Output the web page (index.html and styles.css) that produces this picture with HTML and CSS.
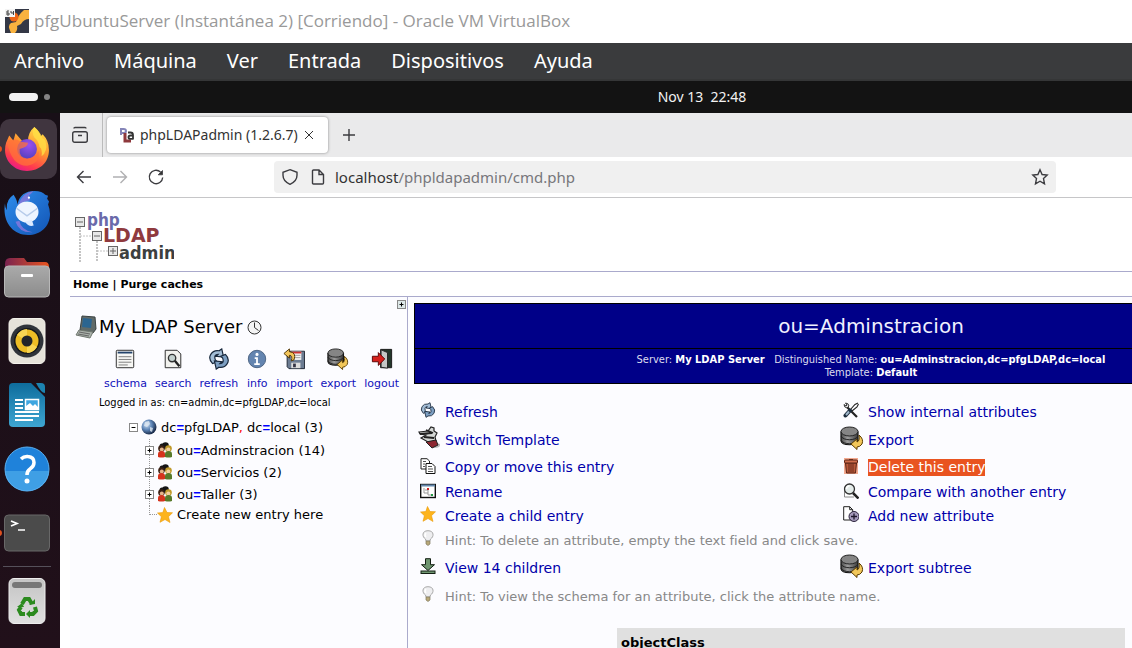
FILE: index.html
```
<!DOCTYPE html>
<html lang="es">
<head>
<meta charset="utf-8">
<title>pfgUbuntuServer - Oracle VM VirtualBox</title>
<link rel="stylesheet" href="styles.css">
</head>
<body>
<svg class="defs" aria-hidden="true">
  <defs>
    <linearGradient id="gFox" x1="0.8" y1="0" x2="0.3" y2="1"><stop offset="0" stop-color="#ffe34a"/><stop offset=".45" stop-color="#ff9430"/><stop offset=".8" stop-color="#ff3a4e"/><stop offset="1" stop-color="#e8188a"/></linearGradient>
    <radialGradient id="gOrb" cx=".6" cy=".3" r=".8"><stop offset="0" stop-color="#9a4ff0"/><stop offset="1" stop-color="#4c3fb8"/></radialGradient>
    <linearGradient id="gBird" x1="0" y1="0" x2="1" y2="1"><stop offset="0" stop-color="#2f8fee"/><stop offset="1" stop-color="#1254b4"/></linearGradient>
    <linearGradient id="gFolder" x1="0" y1="0" x2="1" y2="0"><stop offset="0" stop-color="#7a2350"/><stop offset="1" stop-color="#e9551f"/></linearGradient>
    <linearGradient id="gGrey" x1="0" y1="0" x2="0" y2="1"><stop offset="0" stop-color="#aaa"/><stop offset="1" stop-color="#8c8c8c"/></linearGradient>
    <linearGradient id="gLight" x1="0" y1="0" x2="0" y2="1"><stop offset="0" stop-color="#c4c4c4"/><stop offset="1" stop-color="#e0e0e0"/></linearGradient>
    <linearGradient id="gDoc" x1="0" y1="0" x2="0" y2="1"><stop offset="0" stop-color="#0e6c9c"/><stop offset="1" stop-color="#3ea6d2"/></linearGradient>
    <radialGradient id="gGlobe" cx=".35" cy=".35" r=".7"><stop offset="0" stop-color="#c9dcf0"/><stop offset=".5" stop-color="#5b83b5"/><stop offset="1" stop-color="#14233f"/></radialGradient>
    <linearGradient id="gDisk" x1="0" y1="0" x2="1" y2="0"><stop offset="0" stop-color="#4a4a4a"/><stop offset=".4" stop-color="#9c9c9c"/><stop offset="1" stop-color="#3a3a3a"/></linearGradient>
  </defs>
  <symbol id="refresh" viewBox="0 0 24 24">
    <path d="M5 17Q0 12 3 7q3-5 9-4l3-2 2 9-8-1 2-2q-5 0-3 6l2 2z" fill="#a3bdd6" stroke="#18283c" stroke-width="1.3"/>
    <path d="M19 7q5 5 2 10-3 5-9 4l-3 2-2-9 8 1-2 2q5 0 3-6l-2-2z" fill="#7d9fc2" stroke="#18283c" stroke-width="1.3"/>
  </symbol>
  <symbol id="export" viewBox="0 0 24 24">
    <path d="M1 6v9c1 5 16 5 17 0V6z" fill="url(#gDisk)" stroke="#111" stroke-width="1.2"/>
    <ellipse cx="9.500" cy="5.500" rx="8.500" ry="4.500" fill="#858585" stroke="#222"/>
    <path d="M1 10c2 5 15 5 17 0M1 14c2 5 15 5 17 0" fill="none" stroke="#222"/>
    <path d="M19 9q5 4 3 9-2 3-5 3v2.500L11 18l6-5v3q3-1 2-7z" fill="#f2c75a" stroke="#5a3c00"/>
  </symbol>
  <symbol id="users" viewBox="0 0 16 16">
    <circle cx="8.500" cy="3.500" r="3.300" fill="#151515"/><circle cx="5" cy="4" r="2.500" fill="#151515"/>
    <circle cx="4.500" cy="6.500" r="3.300" fill="#3a2014"/><circle cx="4.800" cy="7.500" r="2" fill="#e5b48c"/>
    <circle cx="11.500" cy="6.500" r="3.300" fill="#c09a2a"/><circle cx="11.300" cy="7.500" r="2" fill="#f3cf9c"/>
    <path d="M1 15V12q0-3 3.500-3T8 12v3q-3.500 1-7 0z" fill="#d5331c"/>
    <path d="M8 15V12q0-3 3.500-3t3.500 3v3q-3.500 1-7 0z" fill="#587a2a"/>
  </symbol>
  <symbol id="star" viewBox="0 0 16 16"><path d="M7.500.500L10 5.500l5.500.200-4 4 1.500 5.800-5-3-5 2.800 1.400-5.600L.500 6l5.300-.500z" fill="#fdb41c" stroke="#eb9b08" stroke-width=".6"/></symbol>
  <symbol id="bulb" viewBox="0 0 16 16">
    <path d="M8 .700c6.500 0 6 6.300 2.500 8.300L10 11H6l-.500-2C2 7 1.500.700 8 .700z" fill="#eeeef0" stroke="#a8a8a8"/>
    <path d="M6 11h4v3l-2 1.500L6 14z" fill="#b8a878" stroke="#807a60" stroke-width=".7"/><path d="M6 3q-2 2 0 4" fill="none" stroke="#fff" stroke-width="1.500"/>
  </symbol>
</svg>

<header class="titlebar">
  <svg class="vm-icon" viewBox="0 0 24 24" aria-hidden="true">
    <rect width="24" height="24" fill="#343846"/><path d="M6 24q-4-8 0-10l5-1q2-7 8-12h5v9q-5 0-8 5l-4 2q1 4-2 7z" fill="#f9b23f"/>
    <circle cx="9" cy="8" r="4.500" fill="#ee6619"/><rect width="10" height="8" fill="#f4f4f4"/>
    <path d="M4 2H2v4h2V4H2M6 2v2h2.500M8.500 2v4" fill="none" stroke="#444"/>
  </svg>
  <span>pfgUbuntuServer (Instantánea 2) [Corriendo] - Oracle VM VirtualBox</span>
</header>
<nav class="menubar">
  <button>Archivo</button><button>Máquina</button><button>Ver</button><button>Entrada</button><button>Dispositivos</button><button>Ayuda</button>
</nav>

<div class="screen">
  <div class="topbar">
    <button class="workspaces" aria-label="Workspaces"><i class="pill"></i><i class="dot"></i></button>
    <time>Nov 13&nbsp; 22:48</time>
  </div>
  <div class="desktop">
    <aside class="dock">
      <button class="app active running" aria-label="Firefox"><svg viewBox="0 0 44 44">
        <path d="M2 16L5 9l4 5 2-7 7 8 5-1q0-8 6-13 5 4 6 9l2-2q6 6 6 15c0 12-9 20-21 20S1 34 1 23q0-4 1-7z" fill="url(#gFox)"/>
        <circle cx="22" cy="22" r="9.500" fill="url(#gOrb)"/>
        <path d="M3 15q8-4 13 0l7 1q0 4-8 6-1 8 7 9 8 0 11-7 2 12-11 14Q7 38 3 15z" fill="#ff7139" opacity=".75"/>
        <path d="M29 1q-3 5 0 10 4 3 5 9 3 2 2 9 6-5 4-13-1-4-3-4-2-6-8-11z" fill="#ffdf45" opacity=".8"/>
      </svg></button>
      <button class="app" aria-label="Thunderbird"><svg viewBox="0 0 48 48">
        <path d="M1 14q0 4 2 7Q2 10 10 5q4 6 4 10Q17 1 32 1q8 0 11 4l3 1-1 3 2 3-1 3q2 5 2 10c0 13-10 22-23 22C9 47-2 33 1 14z" fill="url(#gBird)"/>
        <path d="M15 15Q20 2 31 1l-5 5 1 5q-8 0-14 10zM16 32q2 10 14 12-14 1-18-11z" fill="#8c78dc" opacity=".8"/>
        <ellipse cx="24" cy="23" rx="12" ry="11" fill="#eef5ff"/><path d="M13 19l11 8 11-8" fill="none" stroke="#b6cbea" stroke-width="1.500"/><path d="M22 33q4 6 9 4l-2-6z" fill="#dceaff"/><circle cx="26" cy="8" r="1.200" fill="#fff"/>
      </svg></button>
      <button class="app" aria-label="Files"><svg viewBox="0 0 46 46">
        <path d="M1 10q0-6 5-6h14l3 4h18q4 0 4 5v8H1z" fill="url(#gFolder)"/><rect x=".500" y="12" width="45" height="31" rx="4" fill="url(#gGrey)" stroke="#b8b8b8"/><rect x="17" y="20" width="12" height="3" rx="1" fill="#fff"/>
      </svg></button>
      <button class="app" aria-label="Rhythmbox"><svg viewBox="0 0 46 46">
        <rect x="5" y=".500" width="36" height="45" rx="5" fill="#e6e3da" stroke="#f4f2ec"/><circle cx="23" cy="23" r="16.500" fill="#30343a"/><circle cx="23" cy="23" r="13" fill="#15181c"/><circle cx="23" cy="23" r="11.500" fill="#edbd25"/><path d="M23 23L13 17q4-6 10-6zM23 23l10 6q-4 6-10 6z" fill="#f8d553"/><circle cx="23" cy="23" r="5.500" fill="#22252a"/>
      </svg></button>
      <button class="app" aria-label="LibreOffice Writer"><svg viewBox="0 0 46 46">
        <path d="M9 1h18l14 14v26q0 4-4 4H9q-4 0-4-4V5q0-4 4-4z" fill="url(#gDoc)"/><path d="M32 1h5q4 0 4 4v6q-4 0-9-10z" fill="#1c83b0"/>
        <path d="M11 18h8M11 22h8M11 26h8M11 30h24M11 34h24M11 38h18" stroke="#fff" stroke-width="2"/><rect x="21.500" y="17.500" width="13" height="10" fill="#3ea6e0" stroke="#fff" stroke-width="1.500"/><path d="M22 27v-3l4-3 3 3 2-2 3 3v2z" fill="#fff"/>
      </svg></button>
      <button class="app" aria-label="Help"><svg viewBox="0 0 46 46">
        <circle cx="23" cy="23" r="22" fill="#1f82da"/><path d="M1 25a22 20 0 0 0 44 0z" fill="#3f9fe5"/><circle cx="23" cy="23" r="22" fill="none" stroke="#59aff0"/>
        <path d="M17 13q3-3 7-2.500 6 .500 6 6 0 4-4 6.500-3 2-3 6" fill="none" stroke="#fff" stroke-width="3.500"/><circle cx="23" cy="35" r="2.500" fill="#fff"/>
      </svg></button>
      <button class="app running" aria-label="Terminal"><svg viewBox="0 0 46 46">
        <rect x=".500" y="5" width="45" height="36" rx="4" fill="#4b4b4b" stroke="#686868"/><path d="M7 11l6 2.500L7 16M14 20h7" fill="none" stroke="#fff" stroke-width="1.700"/>
      </svg></button>
      <hr>
      <button class="app" aria-label="Trash"><svg viewBox="0 0 46 46">
        <rect x="5" y=".500" width="36" height="45" rx="5" fill="url(#gLight)" stroke="#eee"/><rect x="8" y="4" width="30" height="6" rx="3" fill="#777"/>
        <g fill="none" stroke="#2b8a1e" stroke-width="4"><path d="M18 26l3-5h4l3 5M31 29l1 4-3 3h-4M21 36h-4l-2-4 2-3"/></g><path d="M25 27l6-1V21zM26 32v8l-4-4zM13 29h7l-2-4z" fill="#2b8a1e"/>
      </svg></button>
    </aside>

    <div class="browser">
      <div class="tabstrip">
        <button class="tool tabview" aria-label="Tab overview"><svg viewBox="0 0 18 18"><rect x="1.700" y="5.700" width="14.600" height="10.600" rx="2"/><path d="M3 2.500q0-1 1-1h10q1 0 1 1M7 9.500h4"/></svg></button>
        <div class="tab">
          <svg class="favicon" viewBox="0 0 16 16" aria-hidden="true"><path d="M2 8V2h2.500Q7 2 7 4T4.500 6H2" fill="none" stroke="#8585b8" stroke-width="2"/><path d="M6 6v8h6" fill="none" stroke="#8e383c" stroke-width="3"/><path d="M9 5.500h2.500Q14 5.500 14 8v4.500M14 8.500h-2.500q-2 0-2 1.700t2 1.700H14" fill="none" stroke="#333" stroke-width="1.800"/></svg>
          <span class="tab-title">phpLDAPadmin (1.2.6.7)</span>
          <button class="close" aria-label="Close tab"><svg viewBox="0 0 10 10"><path d="M1 1l8 8M9 1L1 9"/></svg></button>
        </div>
        <button class="tool" aria-label="New tab"><svg viewBox="0 0 18 18"><path d="M9 3v12M3 9h12"/></svg></button>
      </div>
      <div class="navbar">
        <button class="tool" aria-label="Back"><svg viewBox="0 0 18 18"><path d="M16 9H2.500M8.500 3l-6 6 6 6"/></svg></button>
        <button class="tool faded" aria-label="Forward"><svg viewBox="0 0 18 18"><path d="M2 9h13.500M9.500 3l6 6-6 6"/></svg></button>
        <button class="tool" aria-label="Reload"><svg viewBox="0 0 18 18"><path d="M13.500 4A6.700 6.700 0 1 0 15.700 9.500"/><path d="M15.500 2.500v4.300h-4.300z" fill="#333" stroke-width=".8"/></svg></button>
        <div class="urlbar">
          <svg viewBox="0 0 18 18" aria-hidden="true"><path d="M9 1.700l7 2.600v3q0 6-7 9-7-3-7-9v-3z"/></svg>
          <svg class="page-icon" viewBox="0 0 18 18" aria-hidden="true"><path d="M4.500 2H10l4.500 4.500V15q0 1-1 1h-9q-1 0-1-1V3q0-1 1-1zM10 2v4.500h4.500"/></svg>
          <label for="url">localhost</label><input id="url" type="text" value="/phpldapadmin/cmd.php">
          <button class="bookmark" aria-label="Bookmark"><svg viewBox="0 0 18 18"><path d="M9 1.800l2.100 4.700 5.100.600-3.700 3.500 1 5.200L9 13.200l-4.500 2.600 1-5.200L1.800 7.100l5.100-.600z"/></svg></button>
        </div>
      </div>

      <div class="page">
        <div class="logo">
          <svg viewBox="0 0 104 58" role="img" aria-label="phpLDAPadmin">
            <g stroke="#c4c4c4" stroke-dasharray="2 1" fill="none"><path d="M10 17v35M27 31v21" stroke-width="2"/><path d="M10 26h12M27 41h12"/></g>
            <g fill="#e8e8e8" stroke="#666"><rect x="5.500" y="7.500" width="9" height="9"/><rect x="22.500" y="21.500" width="9" height="9"/><rect x="38.500" y="36.500" width="9" height="9"/><path d="M7 12h6M24 26h6M40 41h6M43 38v6"/></g>
            <text class="l-php" x="17" y="16">php</text>
            <text class="l-ldap" x="33" y="32">LDAP</text>
            <text class="l-admin" x="49" y="49">admin</text>
          </svg>
        </div>
        <nav class="links"><a href="#">Home</a> | <a href="#">Purge caches</a></nav>
        <div class="columns">
          <aside class="tree">
            <button class="expand" aria-label="Expand"><svg viewBox="0 0 9 9"><path d="M4.500 2v5M2 4.500h5"/></svg></button>
            <h2>
              <svg class="server" viewBox="0 0 22 24" aria-hidden="true"><path d="M7 1l13 1 1 12-3 4-13-3z" fill="#606a68" stroke="#3a4242"/><path d="M8 3l9 1-1 9-9-1z" fill="#2b6590"/><path d="M4 15l14 2-3 6-14-3z" fill="#a9b1aa" stroke="#707870"/><path d="M4 17l11 2M3 19l11 2" stroke="#666"/></svg>
              My LDAP Server
              <svg class="clock" viewBox="0 0 15 15" aria-hidden="true"><circle cx="7.500" cy="7.500" r="6.500" fill="#f4f4f4" stroke="#333"/><path d="M7.500 2.500v5l4 3" fill="none" stroke="#333"/></svg>
            </h2>
            <nav class="actions">
              <a href="#"><svg viewBox="0 0 24 24"><rect x="2.500" y="2.500" width="19" height="19" rx="1" fill="#f7f7f4" stroke="#222"/><path d="M4 5h16" stroke="#24446c" stroke-width="2"/><path d="M5 9.500h14M5 12.500h14M5 15.500h14M5 18.500h10" stroke="#777"/></svg>schema</a>
              <a href="#"><svg viewBox="0 0 24 24"><path d="M3.500 2.500h13l4 4v15h-17z" fill="#f2f2ee" stroke="#222"/><circle cx="11" cy="11" r="4" fill="#c4d2cf" stroke="#333" stroke-width="1.500"/><path d="M14 14l5 6" stroke="#222" stroke-width="2.500"/></svg>search</a>
              <a href="#"><svg><use href="#refresh"/></svg>refresh</a>
              <a href="#"><svg viewBox="0 0 24 24"><circle cx="12" cy="12" r="9.500" fill="#6485b0" stroke="#49607f"/><circle cx="12" cy="7" r="1.700" fill="#fff"/><path d="M9.500 11H12v6M9 17.500h6" fill="none" stroke="#fff" stroke-width="2"/></svg>info</a>
              <a href="#"><svg viewBox="0 0 24 24"><path d="M4.500 3.500h19v19h-17l-2-2z" fill="#6c7c92" stroke="#1c2430"/><path d="M9 4h11v9H9z" fill="#f4f4f4"/><path d="M9 5h11" stroke="#cc3333" stroke-width="2"/><path d="M11 8h8M11 10.500h8" stroke="#999"/><path d="M9 16h10v6H9z" fill="#ddd"/><path d="M11 17h3v4h-3z" fill="#334"/><path d="M1 6l6-5v3q8 1 5 9l-3 1q2-6-2-6v3z" fill="#f3c55a" stroke="#4e3200"/></svg>import</a>
              <a href="#"><svg><use href="#export"/></svg>export</a>
              <a href="#"><svg viewBox="0 0 24 24"><path d="M10.500 1.500h12v20h-12z" fill="#23372b" stroke="#111"/><path d="M11 2l7 3v17l-7-1z" fill="#c4c8c6" stroke="#222"/><path d="M1.500 9H8V5l7 7-7 7v-4H1.500z" fill="#d5201c" stroke="#500"/></svg>logout</a>
            </nav>
            <p class="login">Logged in as: cn=admin,dc=pfgLDAP,dc=local</p>
            <ul class="nodes">
              <li class="root"><button class="toggle" aria-label="Collapse"><svg viewBox="0 0 9 9"><path d="M2 4.500h5"/></svg></button><svg class="ico" viewBox="0 0 16 16"><circle cx="8" cy="8" r="7.500" fill="url(#gGlobe)"/><path d="M4 3l4-1 1 3-3 3-3-1zM9 8l3 1-1 4-2-1z" fill="#dfe9f2" opacity=".8"/></svg><a href="#">dc<b>=</b>pfgLDAP<em>,</em> dc<b>=</b>local (3)</a></li>
              <li><button class="toggle" aria-label="Expand"><svg viewBox="0 0 9 9"><path d="M4.500 2v5M2 4.500h5"/></svg></button><svg class="ico"><use href="#users"/></svg><a href="#">ou<b>=</b>Adminstracion (14)</a></li>
              <li><button class="toggle" aria-label="Expand"><svg viewBox="0 0 9 9"><path d="M4.500 2v5M2 4.500h5"/></svg></button><svg class="ico"><use href="#users"/></svg><a href="#">ou<b>=</b>Servicios (2)</a></li>
              <li><button class="toggle" aria-label="Expand"><svg viewBox="0 0 9 9"><path d="M4.500 2v5M2 4.500h5"/></svg></button><svg class="ico"><use href="#users"/></svg><a href="#">ou<b>=</b>Taller (3)</a></li>
              <li class="last"><i class="branch"></i><svg class="ico"><use href="#star"/></svg><a href="#">Create new entry here</a></li>
            </ul>
          </aside>

          <main class="entry">
            <header class="entry-head">
              <h1>ou=Adminstracion</h1>
              <p>Server: <b>My LDAP Server</b> &nbsp; Distinguished Name: <b>ou=Adminstracion,dc=pfgLDAP,dc=local</b><br>Template: <b>Default</b></p>
            </header>
            <div class="commands">
              <div class="cmd"><svg class="ico"><use href="#refresh"/></svg><a href="#">Refresh</a></div>
              <div class="cmd"><svg class="ico" viewBox="0 0 16 16"><path d="M4.500 5.500L14 15" stroke="#222" stroke-width="2.200"/><path d="M1 2.500q0 3 3 3.500l2-2Q5.500 1 2.500 1l1.500 2-1 1z" fill="#ddd" stroke="#222" stroke-width=".9"/><path d="M15 1l-3 1.500L7 8M15.500 2L14 5 9 9" fill="none" stroke="#222" stroke-width="1.100"/><path d="M7 8.500l-4.500 5" stroke="#1c2c3c" stroke-width="4" stroke-linecap="round"/><path d="M6 9.500l-3 3.500" stroke="#9fb6ca" stroke-width="2"/></svg><a href="#">Show internal attributes</a></div>
              <div class="cmd"><svg class="ico big" viewBox="0 0 24 24"><path d="M15 21q6-5 8-3 1 4-6 4z" fill="#bbb"/><path d="M2 6l9-1 3-4 3 1v3l3 2-2 4 1 4-8 1-7-4 5-3-6-1z" fill="#d5d8d6" stroke="#222" stroke-width="1.200"/><path d="M3 8l12-1M7 11l10 1M9 4l7 3" stroke="#222" stroke-width="1.800"/><path d="M9 16l10-2 2 5-6 3z" fill="#8c2630" stroke="#222"/></svg><a href="#">Switch Template</a></div>
              <div class="cmd"><svg class="ico big"><use href="#export"/></svg><a href="#">Export</a></div>
              <div class="cmd"><svg class="ico" viewBox="0 0 16 16"><path d="M1 .700h6L9.500 3v8H1z" fill="#fff" stroke="#222"/><path d="M6 5.500h6l3 3v7H6z" fill="#fff" stroke="#111"/><path d="M3 3.500h3M3 6h2M3 8.500h2M8 8.500h4M8 11h5M8 13.500h5" stroke="#555"/></svg><a href="#">Copy or move this entry</a></div>
              <div class="cmd"><svg class="ico" viewBox="0 0 16 16"><rect x="1" width="14" height="16" fill="#f2a98f"/><path d="M2.500 5l1 10h9l1-10z" fill="#b8593a" stroke="#5a2416"/><rect x="1.500" y="2" width="13" height="3" rx="1" fill="#cf6d4c" stroke="#5a2416"/><path d="M6 6v8M8 6v8M10 6v8M6 1.500h4" stroke="#6c2d1c"/></svg><a class="selected" href="#">Delete this entry</a></div>
              <div class="cmd"><svg class="ico" viewBox="0 0 16 16"><rect x=".700" y="1.500" width="14.600" height="13" fill="#fff" stroke="#111" stroke-width="1.400"/><path d="M1 2.500h14" stroke="#6588ac" stroke-width="2"/><path d="M4 5v5h4M5 7h3M8 7v5h4" fill="none" stroke="#999"/><path d="M7 5h2v2H7z" fill="#c22"/><path d="M11 11h2v2h-2z" fill="#294"/></svg><a href="#">Rename</a></div>
              <div class="cmd"><svg class="ico" viewBox="0 0 16 16"><path d="M1.500 4v10H11" fill="#fff" stroke="#888"/><circle cx="6.500" cy="6" r="5" fill="#e4ecea" stroke="#333" stroke-width="1.300"/><path d="M3.500 6q0-3 3-3" fill="none" stroke="#fff" stroke-width="1.500"/><path d="M10 10l5.500 5.500" stroke="#222" stroke-width="2.500"/></svg><a href="#">Compare with another entry</a></div>
              <div class="cmd"><svg class="ico"><use href="#star"/></svg><a href="#">Create a child entry</a></div>
              <div class="cmd"><svg class="ico" viewBox="0 0 16 16"><path d="M.700.700h6l3 3V14h-9z" fill="#fff" stroke="#222"/><path d="M6.700.700v3h3" fill="none" stroke="#222"/><circle cx="11" cy="10.500" r="5" fill="#a59abb" stroke="#29213a"/><path d="M11 7.500v6M8 10.500h6" stroke="#1d162b" stroke-width="1.300"/></svg><a href="#">Add new attribute</a></div>
              <div class="cmd hint"><svg class="ico"><use href="#bulb"/></svg><span>Hint: To delete an attribute, empty the text field and click save.</span></div>
              <div class="cmd"><svg class="ico" viewBox="0 0 16 16"><path d="M5.500.700h5v6h4L8 12.500 1.500 6.700h4z" fill="#6f9670" stroke="#142014"/><rect x="1" y="13" width="14" height="2.500" fill="#6f9670" stroke="#142014"/></svg><a href="#">View 14 children</a></div>
              <div class="cmd"><svg class="ico big"><use href="#export"/></svg><a href="#">Export subtree</a></div>
              <div class="cmd hint"><svg class="ico"><use href="#bulb"/></svg><span>Hint: To view the schema for an attribute, click the attribute name.</span></div>
            </div>
            <section class="attribute">objectClass</section>
          </main>
        </div>
      </div>
    </div>
  </div>
</div>
</body>
</html>
```
FILE: styles.css
```
* { box-sizing: border-box; }
body {
  margin: 0;
  height: 100vh;
  display: flex;
  flex-direction: column;
  overflow: hidden;
  background: #fff;
  font-family: "DejaVu Sans", sans-serif;
}
button {
  border: 0;
  padding: 0;
  margin: 0;
  background: none;
  font: inherit;
  color: inherit;
}
a { text-decoration: none; color: inherit; }
svg { display: block; flex: none; }
.defs { position: absolute; width: 0; height: 0; }

/* VirtualBox window */
.titlebar {
  flex: none;
  height: 43px;
  display: flex;
  align-items: center;
  gap: 5px;
  padding-left: 5px;
  padding-bottom: 2px;
  font: 17px/24px "Open Sans", sans-serif;
  color: #999;
  white-space: nowrap;
}
.vm-icon { width: 24px; height: 24px; }
.menubar {
  flex: none;
  height: 38px;
  display: flex;
  align-items: center;
  gap: 30px;
  padding-left: 14px;
  background: #3a3b3d;
  border-bottom: 2px solid #353637;
  color: #fff;
  font: 20px/28px "Noto Sans", sans-serif;
}

/* Guest desktop */
.screen { flex: 1; min-width: 1404px; display: flex; flex-direction: column; min-height: 0; }
.topbar {
  flex: none;
  height: 32px;
  display: grid;
  grid-template-columns: 1fr auto 1fr;
  align-items: center;
  padding-bottom: 1px;
  background: #131313;
  color: #f2f2f2;
  font: 14px/20px "Noto Sans", sans-serif;
}
.workspaces { display: flex; align-items: center; gap: 6px; padding-left: 9px; }
.pill { width: 29px; height: 8px; border-radius: 4px; background: #f2f2f2; }
.dot { width: 6px; height: 6px; border-radius: 50%; background: #858585; }
.desktop { flex: 1; display: flex; min-height: 0; }
.dock {
  flex: none;
  width: 60px;
  padding-top: 4px;
  background: linear-gradient(#180f17, #21101a);
  overflow: hidden;
}
.app {
  position: relative;
  width: 57px;
  height: 60px;
  margin: 2px 0;
  display: flex;
  align-items: center;
  padding-left: 4px;
}
.app svg { width: 46px; height: 46px; }
.app.active { background: #40353f; border-radius: 10px; }
.app.running::before {
  content: "";
  position: absolute;
  left: -3px;
  top: 27px;
  width: 5px;
  height: 6px;
  border-radius: 50%;
  background: #e0501f;
}
.dock .app + .app, .dock hr + .app { margin-top: 4px; }
.dock hr { width: 48px; height: 1px; margin: 3px 3px 3px; border: 0; background: #55505a; }

/* Browser chrome */
.browser { flex: 1; display: flex; flex-direction: column; min-width: 0; }
.tabstrip {
  flex: none;
  height: 44px;
  display: flex;
  align-items: center;
  background: #eaeaeb;
  font: 14px/20px "Noto Sans", sans-serif;
  color: #333;
}
.tool svg, .urlbar svg { width: 18px; height: 18px; fill: none; stroke: #3c3c40; stroke-width: 1.4; }
.tabview { height: 44px; width: 43px; padding-left: 11px; border-right: 1px solid #bbb; }
.tab {
  width: 221px;
  height: 36px;
  margin: 0 12px 0 4px;
  display: flex;
  align-items: center;
  padding: 0 14px 0 12px;
  background: #fff;
  border-radius: 4px;
  box-shadow: 0 0 3px #888;
}
.favicon { width: 16px; height: 16px; margin-right: 5px; }
.tab-title { flex: 1; white-space: nowrap; }
.close svg { width: 10px; height: 10px; stroke: #333; fill: none; }
.navbar {
  flex: none;
  height: 41px;
  display: flex;
  align-items: center;
  gap: 18px;
  padding-left: 15px;
  border-bottom: 1px solid #c6c6c8;
}
.faded { opacity: .4; }
.urlbar {
  width: 782px;
  height: 32px;
  margin-left: 91px;
  display: flex;
  align-items: center;
  padding: 0 7px 1px;
  background: #f0f0f0;
  border-radius: 4px;
  font: 15px/20px "Noto Sans", sans-serif;
  color: #333;
}
.urlbar .page-icon { margin: 0 8px 0 10px; }
.urlbar input { flex: 1; min-width: 0; border: 0; padding: 0; background: none; font: inherit; color: #77777b; outline: 0; }

/* phpLDAPadmin */
.page { flex: 1; min-height: 0; display: flex; flex-direction: column; padding: 8px 10px 0; }
.logo { height: 65px; }
.logo svg { width: 104px; height: 58px; margin-top: 4px; }
.logo text { font-weight: bold; font-family: "DejaVu Sans Condensed", "DejaVu Sans", sans-serif; }
.logo .l-php { font-size: 17px; fill: #6a6aaa; }
.logo .l-ldap { font-size: 19px; fill: #8f3a3e; font-family: "DejaVu Sans", sans-serif; }
.logo .l-admin { font-size: 18px; fill: #3c3f3f; }
.links {
  flex: none;
  height: 26px;
  padding-left: 3px;
  border: solid #aaaacc;
  border-width: 1px 0;
  font-weight: bold;
  font-size: 11px;
  line-height: 26px;
}
.columns { flex: 1; display: flex; min-height: 0; background: #fcfcff; }
.tree { position: relative; flex: none; width: 338px; border-right: 1px solid #aaaacc; padding-top: 17px; font-size: 13px; }
.expand, .toggle { width: 9px; height: 9px; border: 1px solid #888; flex: none; display: block; }
.expand { position: absolute; top: 3px; right: 1px; background: #dde8e8; }
.expand svg, .toggle svg { width: 7px; height: 7px; stroke: #000; stroke-width: 1.3; }
.tree h2 { display: flex; align-items: center; gap: 5px; margin: 0; padding-left: 5px; font-weight: normal; font-size: 18px; line-height: 26px; }
.server { width: 22px; height: 24px; margin-right: -3px; }
.clock { width: 15px; height: 15px; }
.actions { display: flex; gap: 8px; padding: 8px 0 0 34px; color: #1111bb; font-size: 11px; line-height: 16px; }
.actions a { display: flex; flex-direction: column; align-items: center; gap: 6px; }
.actions svg { width: 22px; height: 22px; }
.login { margin: 3px 0 4px 29px; font: 11px/16px "DejaVu Sans Condensed", "DejaVu Sans", sans-serif; }
.nodes { list-style: none; margin: 0; padding: 0 0 0 75px; }
.nodes li { display: flex; align-items: center; height: 22px; background: repeating-linear-gradient(#999 0 1px, transparent 1px 2px) 4px 0 / 1px 22px no-repeat; }
.nodes .root { height: 24px; margin-left: -16px; background: none; }
.nodes .last { height: 19px; background: none; }
.toggle { background: #fff; margin-right: 3px; }
.branch { width: 8px; height: 10px; margin: 0 0 9px 4px; border: dotted #999; border-width: 0 0 1px 1px; }
.nodes .ico { width: 16px; height: 16px; margin-right: 4px; }
.nodes b { font-family: "Liberation Sans", sans-serif; color: #00f; }
.nodes em { color: #f00; font-style: normal; }

.entry { flex: none; width: 914px; margin-left: 6px; padding-top: 6px; }
.entry-head { border: 1px solid #000; background: #000088; color: #f0f0ff; text-align: center; }
.entry-head h1 { margin: 0; font-weight: normal; font-size: 20px; line-height: 44px; border-bottom: 1px solid #000; }
.entry-head p { margin: 0; padding: 4px 0; color: #dde; font: 11px/13px "DejaVu Sans Condensed", "DejaVu Sans", sans-serif; }
.entry-head b { color: #fff; }
.commands {
  display: grid;
  grid-template-columns: 423px 1fr;
  grid-template-rows: 28px 28px 27px 23px 24px 24px 32px 24px;
  margin-top: 14px;
  font-size: 14px;
  line-height: 17px;
  color: #0000aa;
}
.cmd { display: grid; grid-template-columns: 31px 1fr; align-items: center; justify-items: start; }
.cmd .ico { width: 16px; height: 16px; margin: -4px 0 0 6px; }
.cmd .big { width: 24px; height: 24px; margin: -4px 0 0 3px; }
.selected { background: #e95420; color: #fff; }
.hint { grid-column: 1 / -1; font-size: 13px; color: #888; }
.attribute { width: 508px; margin: 20px auto 0; padding: 6px 4px 4px; background: #e0e0e0; font-weight: bold; font-size: 13px; line-height: 18px; }
```
